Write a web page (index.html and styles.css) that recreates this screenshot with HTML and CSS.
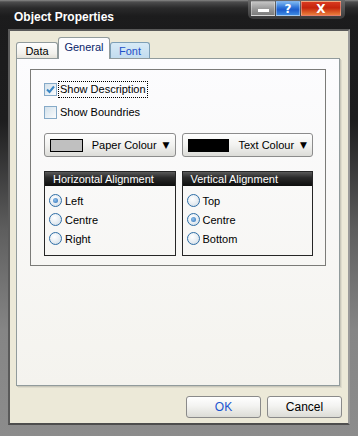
FILE: index.html
```html
<!DOCTYPE html>
<html>
    <head>
        <title>Object Properties</title>
        <meta charset="utf-8" />
        <link rel="stylesheet" href="styles.css">
    </head>
    <body>
        <div class="window">
            <div class="titlebar">
                <span class="title">Object Properties</span>
                <div class="caption">
                    <span class="cap-btn min"><span class="bar"></span></span>
                    <span class="cap-btn help">?</span>
                    <span class="cap-btn close">X</span>
                </div>
            </div>
            <div class="client">
                <div class="tabs">
                    <span class="tab tab-data">Data</span>
                    <span class="tab tab-general active">General</span>
                    <span class="tab tab-font hover">Font</span>
                </div>
                <div class="panel">
                    <div class="frame">
                        <div class="check">
                            <span class="box">
                                <svg width="11" height="11" viewBox="0 0 11 11"><path d="M2 5.5 L4.5 8 L9 2.5" fill="none" stroke="#3a86c4" stroke-width="2"/></svg>
                            </span>
                            <span class="label focus">Show Description</span>
                        </div>
                        <div class="check">
                            <span class="box"></span>
                            <span class="label">Show Boundries</span>
                        </div>
                        <div class="colours">
                            <button class="colour-btn">
                                <span class="swatch paper"></span>
                                <span>Paper Colour</span>
                                <span class="arrow">▼</span>
                            </button>
                            <button class="colour-btn">
                                <span class="swatch ink"></span>
                                <span>Text Colour</span>
                                <span class="arrow">▼</span>
                            </button>
                        </div>
                        <div class="groups">
                            <div class="group">
                                <div class="group-head">Horizontal Alignment</div>
                                <div class="group-body">
                                    <div class="radio"><span class="dot on"></span>Left</div>
                                    <div class="radio"><span class="dot"></span>Centre</div>
                                    <div class="radio"><span class="dot"></span>Right</div>
                                </div>
                            </div>
                            <div class="group">
                                <div class="group-head">Vertical Alignment</div>
                                <div class="group-body">
                                    <div class="radio"><span class="dot"></span>Top</div>
                                    <div class="radio"><span class="dot on"></span>Centre</div>
                                    <div class="radio"><span class="dot"></span>Bottom</div>
                                </div>
                            </div>
                        </div>
                    </div>
                </div>
                <div class="actions">
                    <button class="btn ok">OK</button>
                    <button class="btn">Cancel</button>
                </div>
            </div>
        </div>
    </body>
</html>
```

FILE: styles.css
```css
html, body {
    margin: 0;
    padding: 0;
}
body {
    font-family: "Liberation Sans", Arial, sans-serif;
    font-size: 11px;
    color: #000;
}
.window {
    display: flex;
    flex-direction: column;
    width: 358px;
    height: 436px;
    box-sizing: border-box;
    padding: 0 8px 11px 8px;
    background: linear-gradient(#1b1b1c 0, #1d1d1e 120px, #5e5e5e 230px, #858585 330px, #8c8c8c 100%);
}
.titlebar {
    display: flex;
    align-items: flex-start;
    height: 29px;
    margin: 0 -8px;
    padding-left: 14px;
    background: linear-gradient(#8a8a8a 0, #4c4c4d 2px, #2a2a2b 8px, #1c1c1d 16px, #1b1b1c 100%);
}
.title {
    padding-top: 10px;
    line-height: 14px;
    font-size: 12px;
    font-weight: bold;
    color: #fff;
}
.caption {
    display: flex;
    margin-left: auto;
    margin-right: 13px;
    padding: 1px 4px 3px 2px;
    background: linear-gradient(#6a6a6a, #3a3a3b);
    border-radius: 0 0 5px 5px;
}
.cap-btn {
    display: flex;
    align-items: center;
    justify-content: center;
    width: 24px;
    height: 15px;
    box-sizing: border-box;
    border: 1px solid rgba(255, 255, 255, 0.35);
    font-family: "DejaVu Sans", sans-serif;
    font-weight: bold;
    font-size: 12px;
    color: #fff;
    margin-left: 1px;
}
.min {
    align-items: flex-end;
    padding-bottom: 3px;
    background: linear-gradient(#c4c4c4, #9a9a9a 50%, #7c7c7c);
}
.min .bar {
    width: 11px;
    height: 3px;
    background: #fff;
}
.help {
    background: linear-gradient(#79b4f0, #2a6fd6 45%, #1d5ccc 60%, #3f8be2);
}
.close {
    width: 40px;
    background: linear-gradient(#d83a20, #c4240c 45%, #d2461c 65%, #ea7e3c);
}
.client {
    display: flex;
    flex-direction: column;
    flex: 1;
    border: 2px solid #5a5a5a;
    border-right-color: #9a9a9a;
    border-bottom-color: #4e4e4e;
    background: #ece9d8;
    padding: 6px 7px 0 6px;
}
.tabs {
    display: flex;
    align-items: flex-end;
    height: 21px;
}
.tab {
    display: flex;
    align-items: center;
    justify-content: center;
    box-sizing: border-box;
    height: 16px;
    border: 1px solid #919b9c;
    border-bottom: none;
    border-radius: 3px 3px 0 0;
    background: linear-gradient(#fefefe, #f2f1ec 70%, #e4e2d9);
}
.tab-data {
    width: 42px;
}
.tab-general {
    width: 52px;
}
.tab-font {
    width: 40px;
}
.tab.active {
    position: relative;
    z-index: 1;
    height: 22px;
    margin-bottom: -1px;
    padding-bottom: 4px;
    background: #fcfcfe;
    color: #0a246a;
}
.tab.hover {
    border-color: #7d9fb6;
    background: linear-gradient(#d7eaf7, #c2dcee);
    color: #1f50c8;
}
.panel {
    width: 324px;
    height: 328px;
    box-sizing: border-box;
    margin-right: 1px;
    padding: 10px 13px;
    border: 1px solid #919b9c;
    background: linear-gradient(#fcfcfe, #f4f3ee);
    box-shadow: 1px 1px 0 #c9c7ba, 2px 2px 0 #dddbcc;
}
.frame {
    height: 197px;
    box-sizing: border-box;
    padding: 11px 12px 10px 13px;
    border: 1px solid #7b7b78;
}
.check {
    display: flex;
    align-items: center;
    height: 16px;
    margin-bottom: 7px;
}
.box {
    display: flex;
    align-items: center;
    justify-content: center;
    width: 13px;
    height: 13px;
    box-sizing: border-box;
    border: 1px solid #86aac8;
    background: linear-gradient(135deg, #d3e1eb, #eef3f7 70%, #fbfcfd);
    margin-right: 2px;
}
.label {
    padding: 1px 1px 2px 1px;
    line-height: 12px;
}
.focus {
    outline: 1px dotted #000;
}
.colours {
    display: flex;
    gap: 6px;
    margin-top: 13px;
}
.colour-btn {
    display: flex;
    align-items: center;
    width: 132px;
    height: 24px;
    padding: 0 5px;
    border: 1px solid #8c8c8c;
    border-radius: 3px;
    background: linear-gradient(#fefefe, #f2f2f0 50%, #dcdcd8);
    font: inherit;
    color: #000;
}
.swatch {
    flex: 1;
    height: 13px;
    box-sizing: border-box;
    border: 1px solid #000;
    margin-right: 9px;
}
.paper {
    background: #c0c0c0;
}
.ink {
    background: #000;
}
.arrow {
    margin-left: 6px;
    font-family: "DejaVu Sans", sans-serif;
    font-size: 9px;
}
.groups {
    display: flex;
    gap: 6px;
    margin-top: 14px;
}
.group {
    width: 132px;
    height: 85px;
    box-sizing: border-box;
    border: 1px solid #262626;
}
.group-head {
    height: 14px;
    line-height: 14px;
    padding-left: 8px;
    color: #fff;
    background: linear-gradient(#5a5a5a, #2a2a2a 40%, #0e0e0e);
}
.group-body {
    padding: 5px 0 0 4px;
}
.radio {
    display: flex;
    align-items: center;
    height: 19px;
}
.dot {
    display: flex;
    align-items: center;
    justify-content: center;
    width: 13px;
    height: 13px;
    box-sizing: border-box;
    border: 1px solid #2f6ea6;
    border-radius: 50%;
    background: radial-gradient(circle at 40% 35%, #fff, #e8eef3 50%, #c8d6e2);
    margin-right: 3px;
}
.dot.on::after {
    content: "";
    width: 5px;
    height: 5px;
    border-radius: 50%;
    background: radial-gradient(circle at 40% 40%, #8fc0ea, #2c6fb8);
}
.actions {
    display: flex;
    justify-content: flex-end;
    gap: 6px;
    margin-top: 10px;
    margin-right: -1px;
}
.btn {
    width: 75px;
    height: 22px;
    border: 1px solid #8a8a8a;
    border-radius: 3px;
    background: linear-gradient(#ffffff, #f3f3f1 45%, #dcdcd6);
    font: inherit;
    font-size: 12px;
    color: #000;
}
.btn.ok {
    color: #1c56d0;
}
```
